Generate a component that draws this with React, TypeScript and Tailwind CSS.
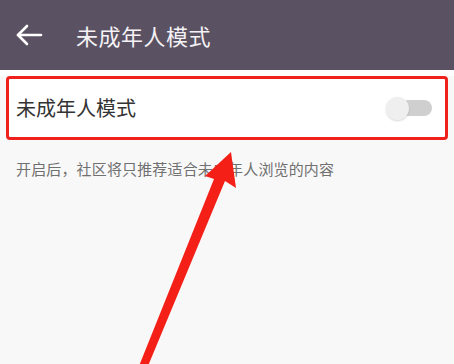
import React from "react";

export default function App() {
  const font = { fontFamily: '"Noto Sans CJK SC", "Noto Sans", sans-serif' };
  return (
    <div className="relative w-[454px] h-[364px] overflow-hidden bg-[#f8f8f8]" style={font}>
      <div className="h-[70px] bg-[#5a5162] flex items-center">
        <svg width="28" height="24" viewBox="0 0 28 24" className="ml-[15px]" fill="none" stroke="#ffffff" strokeWidth="2.6" strokeLinecap="round" strokeLinejoin="round">
          <path d="M3 12 H26" />
          <path d="M12 3 L3 12 L12 21" />
        </svg>
        <span className="ml-[33px] text-[22px] text-[#f4f2f5] leading-none tracking-[0.5px]">未成年人模式</span>
      </div>
      <div className="h-[6px] bg-white" />
      <div className="mx-[6px] h-[64px] border-[3.5px] border-[#f0201c] rounded-[4px] bg-white flex items-center justify-between pl-[7px] pr-[13px]">
        <span className="text-[20px] text-[#333333] leading-none">未成年人模式</span>
        <div className="relative w-[46px] h-[24px] flex items-center">
          <div className="absolute right-0 w-[32px] h-[16px] rounded-full bg-[#cfcfcf]" />
          <div className="absolute left-0 w-[23px] h-[23px] rounded-full bg-[#efefef] shadow-[0_1px_2px_rgba(0,0,0,0.15)]" />
        </div>
      </div>
      <div className="pl-[16px] pt-[21px] text-[15px] text-[#707070] leading-none tracking-[0.15px]">
        开启后，社区将只推荐适合未成年人浏览的内容
      </div>
      <svg className="absolute left-0 top-0" width="454" height="364" viewBox="0 0 454 364">
        <polygon
          points="231,152 236,188 225,181 148,366 139,366 214,179 205,176"
          fill="#f42018"
        />
      </svg>
    </div>
  );
}
